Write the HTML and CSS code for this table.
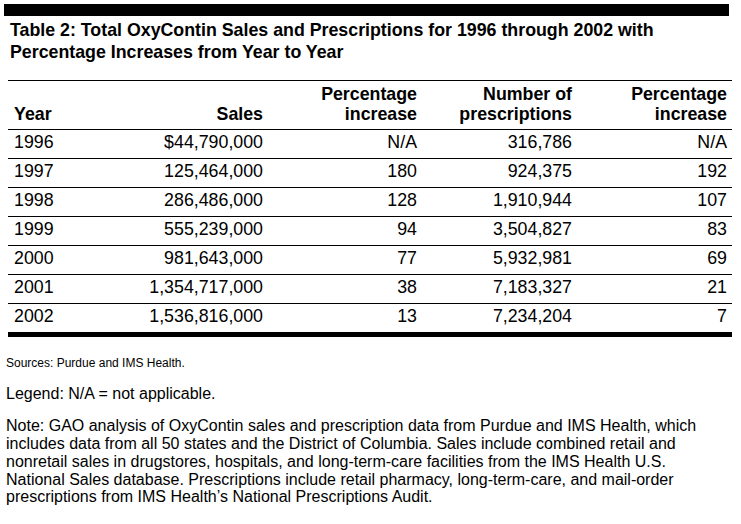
FILE: index.html
```html
<!DOCTYPE html>
<html>
<head>
<meta charset="utf-8">
<link rel="stylesheet" href="styles.css">
</head>
<body>
<div class="page">
  <div class="topbar"></div>
  <h1 class="title">Table 2: Total OxyContin Sales and Prescriptions for 1996 through 2002 with Percentage Increases from Year to Year</h1>
  <div class="table">
    <div class="row head">
      <div class="c1">Year</div>
      <div class="num">Sales</div>
      <div class="num">Percentage<br>increase</div>
      <div class="num">Number of<br>prescriptions</div>
      <div class="num last">Percentage<br>increase</div>
    </div>
    <div class="row"><div class="c1">1996</div><div class="num">$44,790,000</div><div class="num">N/A</div><div class="num">316,786</div><div class="num last">N/A</div></div>
    <div class="row"><div class="c1">1997</div><div class="num">125,464,000</div><div class="num">180</div><div class="num">924,375</div><div class="num last">192</div></div>
    <div class="row"><div class="c1">1998</div><div class="num">286,486,000</div><div class="num">128</div><div class="num">1,910,944</div><div class="num last">107</div></div>
    <div class="row"><div class="c1">1999</div><div class="num">555,239,000</div><div class="num">94</div><div class="num">3,504,827</div><div class="num last">83</div></div>
    <div class="row"><div class="c1">2000</div><div class="num">981,643,000</div><div class="num">77</div><div class="num">5,932,981</div><div class="num last">69</div></div>
    <div class="row"><div class="c1">2001</div><div class="num">1,354,717,000</div><div class="num">38</div><div class="num">7,183,327</div><div class="num last">21</div></div>
    <div class="row final"><div class="c1">2002</div><div class="num">1,536,816,000</div><div class="num">13</div><div class="num">7,234,204</div><div class="num last">7</div></div>
  </div>
  <p class="sources">Sources: Purdue and IMS Health.</p>
  <p class="legend">Legend: N/A = not applicable.</p>
  <p class="note">Note: GAO analysis of OxyContin sales and prescription data from Purdue and IMS Health, which includes data from all 50 states and the District of Columbia. Sales include combined retail and nonretail sales in drugstores, hospitals, and long-term-care facilities from the IMS Health U.S. National Sales database. Prescriptions include retail pharmacy, long-term-care, and mail-order prescriptions from IMS Health’s National Prescriptions Audit.</p>
</div>
</body>
</html>
```
FILE: styles.css
```css
html, body {
  margin: 0;
  padding: 0;
  background: #ffffff;
}
body {
  font-family: "Liberation Sans", Arial, sans-serif;
  color: #000;
}
.page {
  padding-top: 4px;
  width: 741px;
}
.topbar {
  margin-left: 4px;
  width: 725px;
  height: 12px;
  background: #000;
}
.title {
  margin: 2.8px 0 0 10px;
  font-size: 17.8px;
  line-height: 22px;
  font-weight: bold;
}
.table {
  margin: 17.2px 0 0 8px;
  width: 724px;
  font-size: 17.8px;
}
.row {
  display: grid;
  grid-template-columns: 112px 143px 154px 155px 160px;
  padding: 2px 0 6px;
  line-height: 20px;
  border-bottom: 1px solid #000;
}
.row.head {
  border-top: 1px solid #000;
  font-weight: bold;
  line-height: 20px;
  padding: 3px 0 5px;
  align-items: end;
}
.row.final {
  border-bottom: 5px solid #000;
}
.c1 {
  padding-left: 6px;
}
.num {
  text-align: right;
}
.num.last {
  padding-right: 5px;
}
.sources {
  margin: 18.8px 0 0 6px;
  font-size: 12px;
  line-height: 14px;
}
.legend {
  margin: 15.7px 0 0 6px;
  font-size: 16px;
  line-height: 18px;
}
.note {
  margin: 13.8px 0 0 6px;
  width: 714px;
  font-size: 16px;
  line-height: 17.8px;
}
```
